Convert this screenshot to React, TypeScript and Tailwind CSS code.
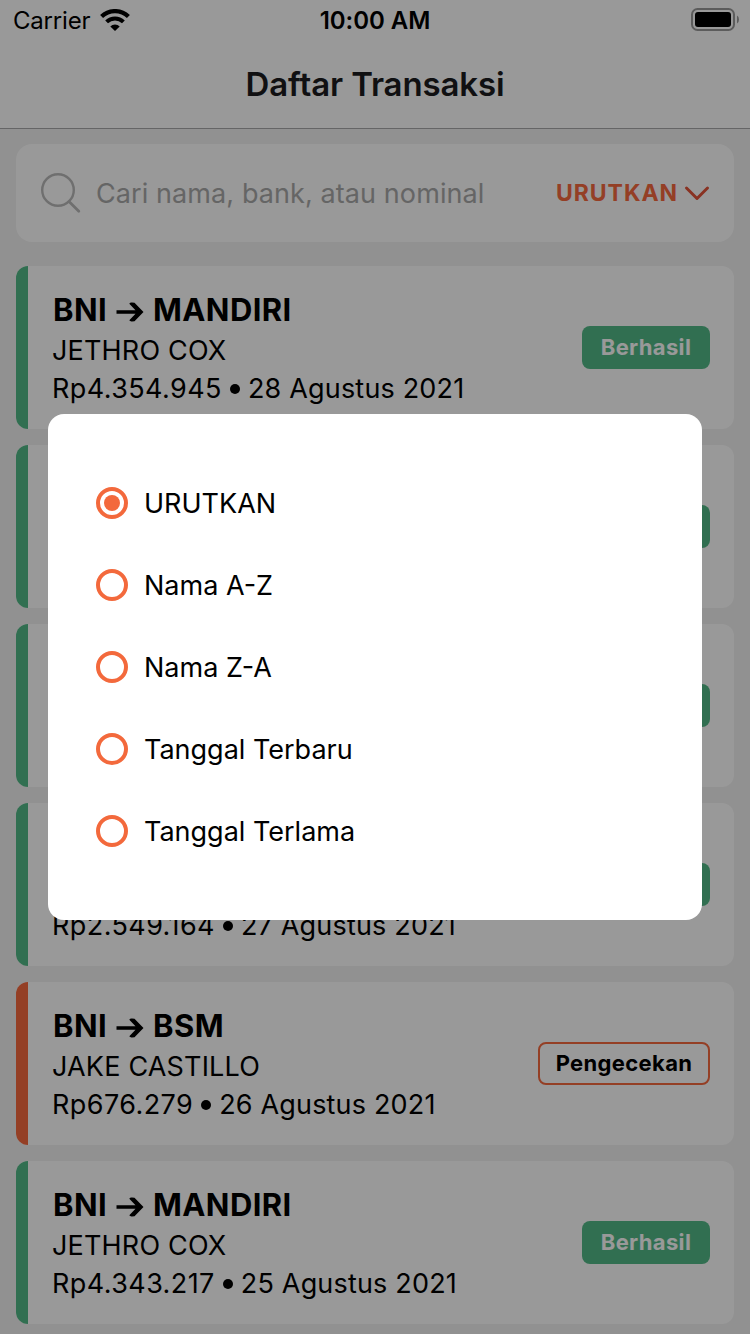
type Status = 'success' | 'pending';

interface Transaction {
  from?: string;
  to?: string;
  name?: string;
  amount?: string;
  date?: string;
  status: Status;
}

const transactions: Transaction[] = [
  { from: 'BNI', to: 'MANDIRI', name: 'JETHRO COX', amount: 'Rp4.354.945', date: '28 Agustus 2021', status: 'success' },
  { status: 'success' },
  { status: 'success' },
  { amount: 'Rp2.549.164', date: '27 Agustus 2021', status: 'success' },
  { from: 'BNI', to: 'BSM', name: 'JAKE CASTILLO', amount: 'Rp676.279', date: '26 Agustus 2021', status: 'pending' },
  { from: 'BNI', to: 'MANDIRI', name: 'JETHRO COX', amount: 'Rp4.343.217', date: '25 Agustus 2021', status: 'success' },
];

const sortOptions = ['URUTKAN', 'Nama A-Z', 'Nama Z-A', 'Tanggal Terbaru', 'Tanggal Terlama'];

function StatusBar() {
  return (
    <div className="grid h-10 grid-cols-3 items-center pr-[11px] pl-[13px] text-2xl">
      <div className="flex items-center gap-[10px]">
        <span className="pt-[2px] tracking-[-0.2px]">Carrier</span>
        <svg className="h-[22px] w-[30px]" viewBox="0 0 30 22" fill="none">
          <path d="M1.6 7.6A19 19 0 0 1 28.4 7.6" stroke="#000" strokeWidth="4.2" />
          <path d="M6.6 12.900A12 12 0 0 1 23.4 12.900" stroke="#000" strokeWidth="4" />
          <path d="M10.3 17.4a6.8 6.8 0 0 1 9.4 0L15 22z" fill="#000" />
        </svg>
      </div>
      <span className="pt-[2px] pr-[2px] text-center font-semibold tracking-[-0.05px]">10:00 AM</span>
      <svg className="mb-[2px] h-[24px] w-[49px] justify-self-end" viewBox="0 0 49 24" fill="none">
        <rect x="2" y="2" width="42" height="21" rx="5.5" stroke="#000" strokeOpacity="0.4" strokeWidth="2" />
        <rect x="5" y="5" width="36" height="15" rx="3" fill="#000" />
        <path d="M47 8.5q2 1.2 2 4t-2 4z" fill="#000" fillOpacity="0.4" />
      </svg>
    </div>
  );
}

function SearchBar() {
  return (
    <div className="flex h-[98px] items-center rounded-2xl bg-white px-6">
      <svg className="h-[42px] w-[42px]" viewBox="0 0 42 42" fill="none" stroke="#bababa" strokeWidth="2.4" strokeLinecap="round">
        <circle cx="18" cy="18" r="15.8" />
        <path d="M29 29.500L38.800 39.300" strokeWidth="2.8" />
      </svg>
      <span className="ml-[14px] grow pt-px text-[27px] leading-10 tracking-[0.09px] text-[#a9a9a9]">Cari nama, bank, atau nominal</span>
      <span className="text-[23px] leading-10 font-bold tracking-[0.95px] text-[#f7693f]">URUTKAN</span>
      <svg className="ml-[6px] h-[18px] w-[26px]" viewBox="0 0 26 18" fill="none" stroke="#e4543a" strokeWidth="3" strokeLinecap="round" strokeLinejoin="round">
        <path d="M2.500 4L13 14.500L23.500 4" />
      </svg>
    </div>
  );
}

function StatusBadge({ status }: { status: Status }) {
  if (status === 'success') {
    return (
      <span className="flex h-[43px] w-32 items-center justify-center rounded-lg bg-[#53b987] text-[22px] font-bold tracking-[0.35px] text-white">
        Berhasil
      </span>
    );
  }
  return (
    <span className="flex h-[43px] w-[172px] items-center justify-center rounded-lg border-2 border-[#f7693f] text-[22px] font-bold tracking-[0.35px]">
      Pengecekan
    </span>
  );
}

function TransactionCard({ item }: { item: Transaction }) {
  return (
    <div className="flex h-[163px] shrink-0 overflow-hidden rounded-xl bg-white">
      <div className={item.status === 'success' ? 'w-3 bg-[#53b987]' : 'w-3 bg-[#f7693f]'} />
      <div className="flex grow items-center justify-between px-6">
        <div className="flex h-[115px] flex-col">
          <div className="mb-[2px] flex h-10 shrink-0 items-center text-[31px] leading-10 font-bold">
            {item.to && (
              <>
                <span className="pl-px tracking-[0.4px]">{item.from}</span>
                <svg className="mt-[3px] mr-[9px] ml-[9px] h-[20px] w-[28px]" viewBox="0 0 28 20" fill="#000">
                  <path d="M0.500 8.200H19.500L13.300 1.700Q14 0.400 16 0.600L18.500 0.800L27.500 10L18.500 19.200L16 19.400Q14 19.600 13.300 18.300L19.500 11.800H0.500z" />
                </svg>
                <span className="tracking-[0.4px]">{item.to}</span>
              </>
            )}
          </div>
          <div className="h-[38px] shrink-0 text-[27px] leading-[38px] tracking-[0.18px]">{item.name}</div>
          <div className="flex h-[38px] shrink-0 items-center text-[27px] leading-[38px] whitespace-nowrap">
            {item.amount && (
              <>
                <span className="tracking-[0.42px]">{item.amount}</span>
                <span className="mr-2 mb-px ml-[8px] h-[10px] w-[10px] rounded-full bg-black" />
                <span className="tracking-[0.18px]">{item.date}</span>
              </>
            )}
          </div>
        </div>
        <StatusBadge status={item.status} />
      </div>
    </div>
  );
}

function SortDialog() {
  return (
    <div className="absolute inset-0 flex items-center justify-center bg-black/40">
      <div className="flex h-[506px] w-[654px] flex-col rounded-2xl bg-white p-12">
        {sortOptions.map((option, index) => (
          <div key={option} className="flex h-[82px] items-center gap-4">
            <span className="flex h-8 w-8 items-center justify-center rounded-full border-4 border-[#f3693c]">
              {index === 0 && <span className="h-4 w-4 rounded-full bg-[#f3693c]" />}
            </span>
            <span className="pt-px text-[27px] leading-10 tracking-[0px]">{option}</span>
          </div>
        ))}
      </div>
    </div>
  );
}

export default function App() {
  return (
    <div className="relative h-[1334px] w-[750px] overflow-hidden bg-[#f2f2f2] font-['Inter',sans-serif] text-black">
      <header className="h-[129px] border-b border-[#a9a9ab] bg-white">
        <StatusBar />
        <h1 className="pt-px text-center text-[33px] leading-[87px] font-semibold tracking-[-0.12px] text-[#1c1c1e]">Daftar Transaksi</h1>
      </header>
      <main className="flex flex-col px-4 pt-[15px]">
        <SearchBar />
        <div className="mt-6 flex flex-col gap-4">
          {transactions.map((item, index) => (
            <TransactionCard key={index} item={item} />
          ))}
        </div>
      </main>
      <SortDialog />
    </div>
  );
}
